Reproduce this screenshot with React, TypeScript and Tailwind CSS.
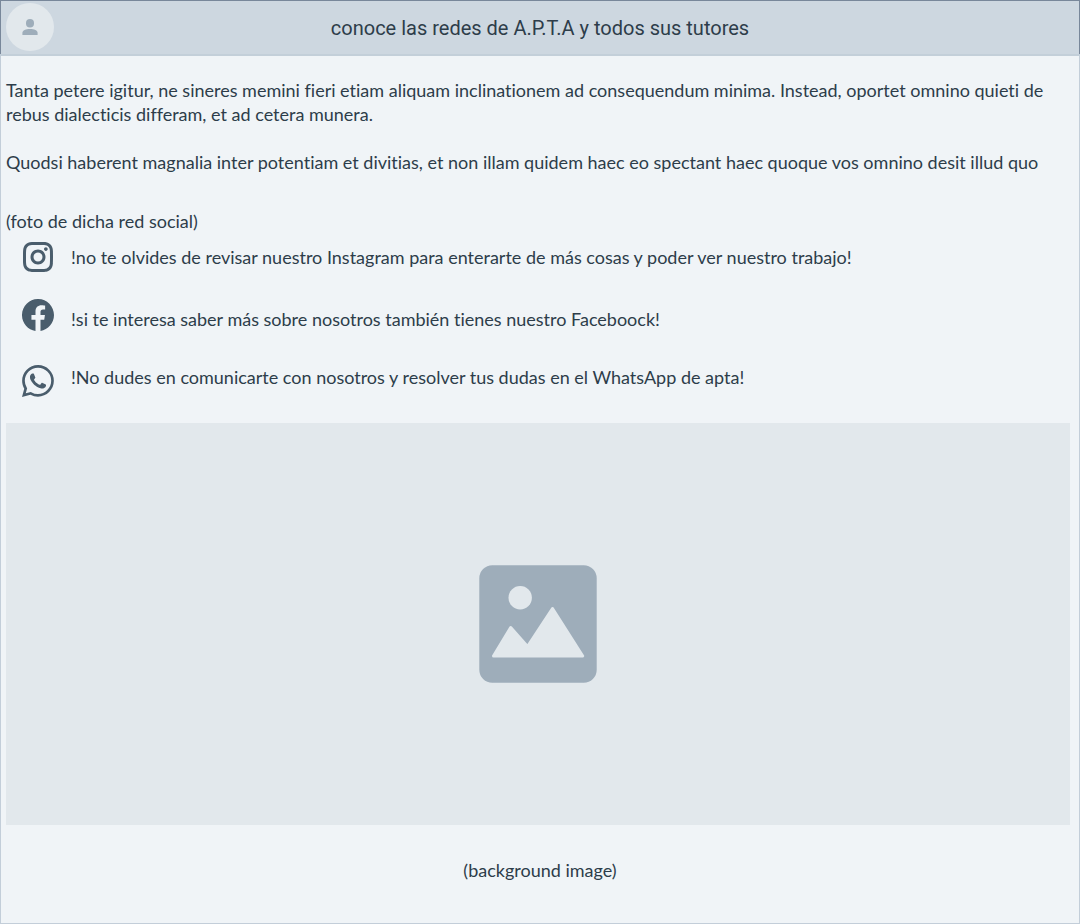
import type { ReactNode } from "react";
import { BsFacebook, BsWhatsapp } from "react-icons/bs";
import { RiInstagramLine } from "react-icons/ri";

function Avatar() {
  return (
    <div className="flex size-12 shrink-0 items-center justify-center rounded-full bg-[#e2e8ec]">
      <svg viewBox="0 0 16 16" className="size-4 fill-[#9eadba]" aria-hidden="true">
        <rect x="4" y="0" width="8" height="8.6" rx="4" />
        <path d="M.4 16v-2.2C.4 11.4 3.8 10 8 10s7.600 1.400 7.600 3.800V16z" />
      </svg>
    </div>
  );
}

function Picture() {
  return (
    <svg viewBox="0 0 118 118" className="size-[118px]" aria-hidden="true">
      <rect x=".3" y=".3" width="117.400" height="117.400" rx="13" fill="#9eadba" />
      <circle cx="41.200" cy="32.700" r="11.700" fill="#e2e8ec" />
      <path
        d="M14.500 91 L31.700 62.500 L48.500 81.500 L73.500 43.500 L103.700 91 Z"
        fill="#e2e8ec"
        stroke="#e2e8ec"
        strokeWidth="3"
        strokeLinejoin="round"
      />
    </svg>
  );
}

function SocialRow({ icon, className, children }: { icon: ReactNode; className: string; children: ReactNode }) {
  return (
    <li className={`flex gap-3 ${className}`}>
      <span className="flex w-[42px] shrink-0 justify-center text-[#4a5d6c]">{icon}</span>
      <p>{children}</p>
    </li>
  );
}

export default function App() {
  return (
    <div className="flex min-h-screen flex-col border border-t-0 border-[#c3ced9] bg-[#f0f4f7] font-['Lato','Liberation_Sans',sans-serif] text-lg leading-6 text-[#2d3d4a] [font-variant-ligatures:none]">
      <header className="-mx-px border-b-2 border-[#c3cfd9]">
        <div className="grid h-[54px] grid-cols-[48px_1fr_48px] items-start border border-b-0 border-[#78879a] bg-[#cdd7e0] px-[5px] pt-0.5">
          <Avatar />
          <h1 className="text-center font-['Roboto','Liberation_Sans',sans-serif] text-xl leading-[50px]">
            conoce las redes de A.P.T.A y todos sus tutores
          </h1>
        </div>
      </header>

      <main className="flex flex-col pt-[22px] pr-[9px] pl-[5px]">
        <p>
          Tanta petere igitur, ne sineres memini fieri etiam aliquam inclinationem ad consequendum minima. Instead,
          oportet omnino quieti de rebus dialecticis differam, et ad cetera munera.
        </p>
        <p className="mt-6">
          Quodsi haberent magnalia inter potentiam et divitias, et non illam quidem haec eo spectant haec quoque vos
          omnino desit illud quo
        </p>
        <p className="mt-[35px]">(foto de dicha red social)</p>

        <ul className="mt-1.5 flex flex-col pl-[11px]">
          <SocialRow className="items-center" icon={<RiInstagramLine className="size-9" />}>
            !no te olvides de revisar nuestro Instagram para enterarte de más cosas y poder ver nuestro trabajo!
          </SocialRow>
          <SocialRow className="mt-6 items-end" icon={<BsFacebook className="size-8" />}>
            !si te interesa saber más sobre nosotros también tienes nuestro Faceboock!
          </SocialRow>
          <SocialRow className="mt-[34px] items-start" icon={<BsWhatsapp className="size-8" />}>
            !No dudes en comunicarte con nosotros y resolver tus dudas en el WhatsApp de apta!
          </SocialRow>
        </ul>

        <div className="mt-[26px] flex h-[402px] items-center justify-center bg-[#e2e8ec]">
          <Picture />
        </div>
      </main>

      <footer className="pt-[33px] pb-10 text-center">(background image)</footer>
    </div>
  );
}
